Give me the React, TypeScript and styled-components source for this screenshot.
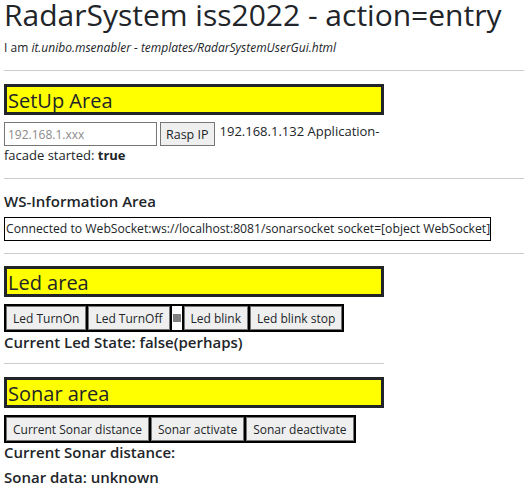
import React from 'react';
import styled, { createGlobalStyle } from 'styled-components';

const GlobalStyle = createGlobalStyle`
  body {
    margin: 0;
    background: #ffffff;
    color: #212529;
    font-family: "Open Sans", "Noto Sans", sans-serif;
  }
`;

const Page = styled.div`
  padding: 0 0 0 4px;
  width: 520px;
`;

const Title = styled.h1`
  margin: 0;
  font-size: 30px;
  font-weight: 400;
  line-height: 30px;
  white-space: nowrap;
`;

const Subtitle = styled.p`
  margin: 9px 0 0;
  font-size: 12px;
  line-height: 18px;
`;

const Rule = styled.hr<{ $above: number; $below: number; $short?: boolean }>`
  margin: ${(p) => p.$above}px 0 ${(p) => p.$below}px;
  border: 0;
  border-top: 1px solid #cccccc;
  width: ${(p) => (p.$short ? '380px' : '520px')};
`;

const AreaHeading = styled.h2`
  margin: 0;
  box-sizing: border-box;
  width: 380px;
  height: 31px;
  background: #ffff00;
  border: 3px solid #212529;
  padding: 0 0 0 1px;
  font-size: 20px;
  font-weight: 400;
  line-height: 27px;
  overflow: visible;
`;

const SetupRow = styled.div`
  width: 384px;
  margin-top: 7px;
  font-size: 13px;
  line-height: 18px;
  b {
    font-weight: 700;
  }
`;

const IpInput = styled.input`
  box-sizing: border-box;
  width: 153px;
  height: 24px;
  padding: 0 3px;
  margin: 0 3px 0 0;
  border: 1px solid #767676;
  font-family: inherit;
  font-size: 12px;
  vertical-align: top;
  &::placeholder {
    color: #8a8a8a;
  }
`;

const RaspButton = styled.button`
  box-sizing: border-box;
  height: 24px;
  padding: 0 5px;
  margin: 0 5px 0 0;
  border: 1px solid #767676;
  background: #efefef;
  color: #212529;
  font-family: inherit;
  font-size: 12.5px;
  vertical-align: top;
`;

const WsHeading = styled.h4`
  margin: 0;
  font-size: 15px;
  font-weight: 600;
  line-height: 22px;
`;

const WsBox = styled.div`
  box-sizing: border-box;
  width: 487px;
  height: 24px;
  margin-top: 5px;
  border: 1px solid #000000;
  padding: 0 0 0 1px;
  font-size: 12.2px;
  line-height: 22px;
  white-space: nowrap;
  overflow: hidden;
`;

const ButtonTable = styled.table`
  margin-top: 7px;
  border: 1px solid #000000;
  border-spacing: 0;
  border-collapse: separate;
  td {
    border: 1px solid #000000;
    padding: 0;
    vertical-align: middle;
  }
`;

const CmdButton = styled.button`
  box-sizing: border-box;
  height: 24px;
  margin: 0;
  padding: 0 6px;
  border: 1px solid #767676;
  background: #efefef;
  color: #212529;
  font-family: inherit;
  font-size: 12px;
  display: block;
`;

const LedDot = styled.div`
  width: 8px;
  height: 8px;
  margin: 0 1px;
  background: #808080;
`;

const StateLine = styled.h5<{ $gap?: number }>`
  margin: ${(p) => p.$gap ?? 0}px 0 0;
  font-size: 15px;
  font-weight: 600;
  line-height: 18px;
`;

export default function App() {
  return (
    <Page>
      <GlobalStyle />
      <Title>RadarSystem iss2022 - action=entry</Title>
      <Subtitle>
        I am <em>it.unibo.msenabler - templates/RadarSystemUserGui.html</em>
      </Subtitle>
      <Rule $above={13} $below={13} />
      <AreaHeading>SetUp Area</AreaHeading>
      <SetupRow>
        <IpInput placeholder="192.168.1.xxx" />
        <RaspButton>Rasp IP</RaspButton>
        192.168.1.132 Application-facade started: <b>true</b>
      </SetupRow>
      <Rule $above={14} $below={11} />
      <WsHeading>WS-Information Area</WsHeading>
      <WsBox>Connected to WebSocket:ws://localhost:8081/sonarsocket socket=[object WebSocket]</WsBox>
      <Rule $above={12} $below={12} />
      <AreaHeading>Led area</AreaHeading>
      <ButtonTable>
        <tbody>
          <tr>
            <td><CmdButton>Led TurnOn</CmdButton></td>
            <td><CmdButton>Led TurnOff</CmdButton></td>
            <td><LedDot /></td>
            <td><CmdButton>Led blink</CmdButton></td>
            <td><CmdButton>Led blink stop</CmdButton></td>
          </tr>
        </tbody>
      </ButtonTable>
      <StateLine $gap={1}>Current Led State: false(perhaps)</StateLine>
      <Rule $short $above={12} $below={13} />
      <AreaHeading>Sonar area</AreaHeading>
      <ButtonTable>
        <tbody>
          <tr>
            <td><CmdButton>Current Sonar distance</CmdButton></td>
            <td><CmdButton>Sonar activate</CmdButton></td>
            <td><CmdButton>Sonar deactivate</CmdButton></td>
          </tr>
        </tbody>
      </ButtonTable>
      <StateLine>Current Sonar distance:</StateLine>
      <StateLine $gap={7}>Sonar data: unknown</StateLine>
    </Page>
  );
}
